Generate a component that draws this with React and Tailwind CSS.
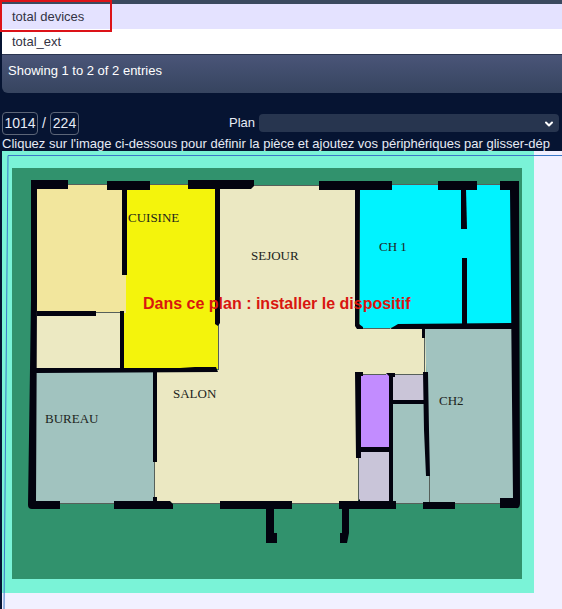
import { ChevronDown } from "lucide-react";

const rows = ["total devices", "total_ext"];

const rooms = [
  { points: "36,184 126,184 126,313 36,313", fill: "#f2e69d" },
  { points: "36,313 122,313 122,370 36,370", fill: "#ece9c2" },
  { points: "126,185 218,185 218,369 123,369 123,313 126,313", fill: "#f4f40c" },
  { points: "219,186 358,186 358,328 426,328 426,375 358,375 358,503 155,503 155,370 219,370", fill: "#ebe8c2" },
  { points: "360,185 512,185 512,325 398,325 390,328 360,328", fill: "#00f3ff" },
  { points: "36,372 154,372 154,503 36,503", fill: "#a1c3bf" },
  { points: "425,328 513,328 513,504 430,504", fill: "#a1c3bf" },
  { points: "392,403 427,403 430,504 392,504", fill: "#a1c3bf" },
  { points: "393,374 425,374 425,402 393,402", fill: "#cac5d8" },
  { points: "360,374 390,374 390,449 360,449", fill: "#c28cff" },
  { points: "359,450 390,450 390,503 359,503", fill: "#c9c5d9" },
];

const walls = [
  "M31 180H68V189H37V300L36 501H60V509H32Q28 509 28 505L31 300Z",
  "M107 181H150V190H107Z",
  "M122 189H127V275H122Z",
  "M37 311H96V316H37Z",
  "M120 311H124V370H120Z",
  "M188 180H254V186L251 189H188Z",
  "M215 188H220L220 323L218 326L215 324Z",
  "M319 181H392V190H319Z",
  "M355 188H360L359 324L363 327V329H357L355 326Z",
  "M438 181H477V190H438Z",
  "M461 189H466L467 229H461Z",
  "M462 258H467V327H462Z",
  "M500 181H519V189L520 503Q520 509 516 508H500V498H513L512 400L510 190H500Z",
  "M390 329L398 324L512 323V329Z",
  "M36 368H180L195 367H216L218 372L36 373Z",
  "M153 372H157V462H153Z",
  "M114 501H153V497H157V501H170L173 504V509H114Z",
  "M220 501H292V509H274V533H277V543H266V509H220Z",
  "M339 501H358L360 499V501H396V509H349V533L347 543H340V533H342V509H339Z",
  "M355 372H363V376H361V458H356Z",
  "M386 373H395V377H393V502H389V376Z",
  "M359 447H391V452H359Z",
  "M392 400H427V404H392Z",
  "M422 328H425V338H422Z",
  "M423 372H428L429 430L430 476H426L424 430Z",
  "M423 502H455V509H423Z",
];

const labels = [
  { x: 128, y: 222, text: "CUISINE" },
  { x: 251, y: 260, text: "SEJOUR" },
  { x: 379, y: 251, text: "CH 1" },
  { x: 173, y: 398, text: "SALON" },
  { x: 45, y: 423, text: "BUREAU" },
  { x: 439, y: 405, text: "CH2" },
];

function FloorPlan() {
  return (
    <svg viewBox="2 151 532 442" width="532" height="442" className="block shrink-0" role="img" aria-label="Plan">
      <rect x="2" y="151" width="532" height="442" fill="#7af3d7" />
      <rect x="12" y="168" width="510" height="411" fill="#31926d" />
      {rooms.map((room) => (
        <polygon key={room.points} points={room.points} fill={room.fill} />
      ))}
      <path
        d="M68 184.5H107M150 184.5H188M254 185.5H319M392 184.5H438M477 184.5H500M60 503.5H114M173 503.5H220M292 503.5H339M396 503.5H423M455 503.5H500M96 312.5H120M218.5 326V370M154.5 462V497M358.5 458V500M424.5 338V372M429.5 476V504M363 374.5H386M395 374.5H423M363 328.5H390"
        stroke="#56605a"
        strokeWidth="1"
        fill="none"
      />
      {walls.map((d) => (
        <path key={d} d={d} fill="#03030f" />
      ))}
      {labels.map((label) => (
        <text key={label.text} x={label.x} y={label.y} fill="#20241c" fontSize="13" fontFamily="'Liberation Serif', serif">
          {label.text}
        </text>
      ))}
      <text x="143" y="309" fill="#d9160f" fontSize="16" fontWeight="700" fontFamily="'Liberation Sans', sans-serif">
        Dans ce plan : installer le dispositif
      </text>
    </svg>
  );
}

export default function App() {
  return (
    <div className="min-h-screen overflow-hidden bg-[#061432] pl-[2px] font-['Liberation_Sans',Arial,sans-serif] text-[13px] leading-4 text-[#e6ebf5]">
      <section>
        <div className="h-1 bg-[#3a495f]" />
        <div className="relative">
          <table className="w-full border-collapse text-left text-[#333344]">
            <tbody>
              {rows.map((row) => (
                <tr key={row} className="h-[25px] odd:bg-[#e4e2ff] even:bg-white">
                  <td className="px-[10px] py-0">{row}</td>
                </tr>
              ))}
            </tbody>
          </table>
          <div className="absolute -left-[2px] -top-1 h-8 w-28 border-2 border-[#dc1218]" />
        </div>
        <p className="h-[39px] rounded-bl-md border-t border-[#2b3550] bg-linear-to-b from-[#4a5578] to-[#36445f] px-[6px] pt-2 text-white">
          Showing 1 to 2 of 2 entries
        </p>
      </section>

      <form className="mt-[18px] flex h-6 items-center">
        <input aria-label="Position X" readOnly value="1014" className="h-[23px] w-9 rounded-[4px] border border-[#5d6678] bg-transparent text-center text-sm" />
        <span className="w-3 text-center text-sm">/</span>
        <input aria-label="Position Y" readOnly value="224" className="h-[23px] w-[29px] rounded-[4px] border border-[#5d6678] bg-transparent text-center text-sm" />
        <label htmlFor="plan" className="ml-auto pr-1">Plan</label>
        <div className="relative mr-[3px] w-[300px]">
          <select id="plan" defaultValue="" className="block h-[18px] w-full appearance-none rounded-[4px] bg-[#27354f] px-2">
            <option value=""></option>
          </select>
          <ChevronDown className="pointer-events-none absolute right-1 top-1 h-3 w-3 text-white" strokeWidth={4} />
        </div>
      </form>
      <p className="h-4 whitespace-nowrap leading-[18px]">
        Cliquez sur l'image ci-dessous pour définir la pièce et ajoutez vos périphériques par glisser-dép
      </p>

      <main className="relative min-h-[458px] bg-[#f1f0ff]">
        <FloorPlan />
        <svg className="pointer-events-none absolute inset-0 h-full w-full" aria-hidden="true">
          <path d="M2 458L6 4.5H2000" stroke="#3c78c8" strokeWidth="1" fill="none" />
        </svg>
      </main>
    </div>
  );
}
